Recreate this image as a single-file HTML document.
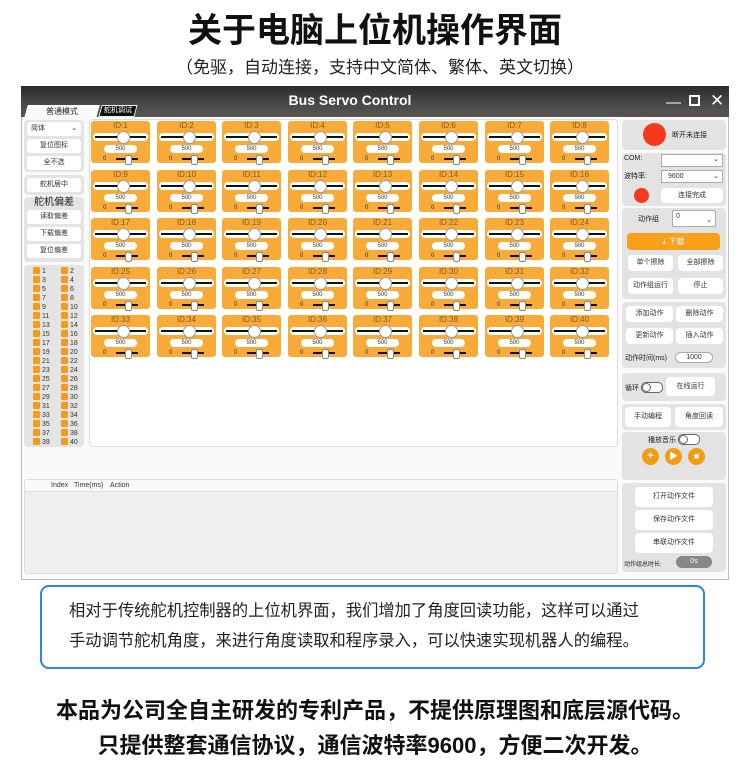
<!DOCTYPE html>
<html><head><meta charset="utf-8">
<style>
*{margin:0;padding:0;box-sizing:border-box}
body{width:750px;height:766px;background:#fff;position:relative;overflow:hidden;font-family:"Liberation Sans","Noto Sans CJK SC",sans-serif;color:#222}
.a{position:absolute}
.t1{left:0;width:750px;top:11px;text-align:center;font-size:34px;font-weight:bold;line-height:40px;color:#111}
.t2{left:0;width:760px;top:57px;text-align:center;font-size:17px;line-height:22px;color:#222}
.win{left:21px;top:86px;width:708px;height:494px;background:#fafafa;border:1px solid #bbb}
.tb{left:21px;top:86px;width:708px;height:31px;background:linear-gradient(#2b2b2b,#4a4a4a 60%,#5b5450)}
.ttl{left:200px;width:300px;top:92px;text-align:center;color:#fff;font-weight:bold;font-size:14px}
.tab1{left:26px;top:105px;width:72px;height:13px;background:#fafafa;transform:skewX(-15deg)}
.tab2{left:100px;top:105px;width:36px;height:12px;background:#111;border:1px solid #eee;transform:skewX(-15deg)}
.tl{font-size:8px;text-align:center;line-height:13px}
.wc{top:94px;color:#fff;font-size:15px}
.grid{left:89px;top:119px;width:529px;height:328px;background:#fff;border:1px solid #ddd;border-radius:4px}
.c{position:absolute;width:59px;height:42px;background:#f9ab3a;border-radius:3px;font-size:8px;color:#8a5a14;text-align:center;line-height:10px}
.c i{position:absolute;left:2px;top:12px;width:55px;height:8px;background:#fff;border-radius:4px}
.c i:before{content:"";position:absolute;left:2px;right:2px;top:3px;height:2px;background:#111}
.c i:after{content:"";position:absolute;left:24px;top:-2px;width:11px;height:11px;border-radius:50%;background:#fff;border:1px solid #999}
.c b{position:absolute;left:13px;top:24px;width:33px;height:8px;background:#fff;border-radius:4px;font-weight:normal;font-size:6px;line-height:8px;color:#333}
.c u{position:absolute;left:12px;top:33px;font-size:6px;text-decoration:none;color:#333}
.c s{position:absolute;left:25px;top:37px;width:22px;height:2px;background:#111}
.c s:after{content:"";position:absolute;left:9px;top:-3px;width:5px;height:8px;border-radius:2px;background:#fff;border:1px solid #888}
.lp{left:24px;background:#e4e4e4;border-radius:4px;width:60px}
.lb{position:absolute;left:3px;width:54px;height:14px;background:#fff;border-radius:3px;font-size:7px;text-align:center;line-height:14px;color:#333}
.ck{position:absolute;font-size:7px;line-height:9px;color:#333}
.ck span{display:inline-block;width:7px;height:7px;background:#f59a1c;border-radius:1px;margin-right:2px;vertical-align:-1px}
.rp{left:622px;width:104px;background:#e3e3e3;border-radius:4px}
.rb{position:absolute;background:#fff;border-radius:4px;font-size:7px;text-align:center;color:#333}
.log{left:24px;top:479px;width:594px;height:95px;background:#efefef;border:1px solid #ddd;border-radius:3px}
.box{left:40px;top:585px;width:665px;height:84px;border:2px solid #2b84f0;border-radius:9px}
.bt{left:69px;font-size:16.3px;line-height:20px;color:#222}
.ft{left:0;width:750px;text-align:center;font-size:22px;font-weight:bold;line-height:26px;color:#111}
.oc{position:absolute;width:17px;height:17px;border-radius:50%;background:#f39c12;color:#fff;font-size:11px;text-align:center;line-height:17px;font-weight:bold}
.tg{position:absolute;width:20px;height:9px;border:1px solid #666;border-radius:5px;background:#fff}
.tg:after{content:"";position:absolute;left:0;top:0;width:7px;height:7px;border-radius:50%;border:1px solid #666;background:#fff}
</style></head><body>
<div class="a t1">关于电脑上位机操作界面</div>
<div class="a t2">（免驱，自动连接，支持中文简体、繁体、英文切换）</div>

<div class="a win"></div>
<div class="a tb"></div>
<div class="a ttl">Bus Servo Control</div>
<div class="a tab1"></div>
<div class="a tl" style="left:26px;top:105px;width:72px">普通模式</div>
<div class="a tab2"></div>
<div class="a tl" style="left:100px;top:104px;width:36px;color:#fff;font-size:7px;overflow:hidden;height:12px">舵机调试</div>
<div class="a wc" style="left:666px">—</div>
<div class="a wc" style="left:689px;top:95px;width:11px;height:11px;border:2px solid #fff"></div>
<div class="a wc" style="left:710px;top:91px;font-size:17px">✕</div>

<div class="a lp" style="top:120px;height:52px">
<div class="lb" style="top:2px;text-align:left;padding-left:4px">简体<span style="float:right;margin-right:4px">⌄</span></div>
<div class="lb" style="top:19px">复位图标</div>
<div class="lb" style="top:36px">全不选</div>
</div>
<div class="a lp" style="top:175px;height:20px"><div class="lb" style="top:3px">舵机居中</div></div>
<div class="a lp" style="top:197px;height:65px">
<div style="position:absolute;top:0px;width:60px;text-align:center;font-size:10px;line-height:12px">舵机偏差</div>
<div class="lb" style="top:13px">读取偏差</div>
<div class="lb" style="top:30px">下载偏差</div>
<div class="lb" style="top:47px">复位偏差</div>
</div>
<div class="a lp" style="top:265px;height:182px">
<div class="ck" style="left:9px;top:2px"><span></span>1<br><span></span>3<br><span></span>5<br><span></span>7<br><span></span>9<br><span></span>11<br><span></span>13<br><span></span>15<br><span></span>17<br><span></span>19<br><span></span>21<br><span></span>23<br><span></span>25<br><span></span>27<br><span></span>29<br><span></span>31<br><span></span>33<br><span></span>35<br><span></span>37<br><span></span>39</div>
<div class="ck" style="left:37px;top:2px"><span></span>2<br><span></span>4<br><span></span>6<br><span></span>8<br><span></span>10<br><span></span>12<br><span></span>14<br><span></span>16<br><span></span>18<br><span></span>20<br><span></span>22<br><span></span>24<br><span></span>26<br><span></span>28<br><span></span>30<br><span></span>32<br><span></span>34<br><span></span>36<br><span></span>38<br><span></span>40</div>
</div>

<div class="a grid"></div>
<div class="c" style="left:91px;top:121px">ID:1<i></i><b>500</b><u>0</u><s></s></div>
<div class="c" style="left:157px;top:121px">ID:2<i></i><b>500</b><u>0</u><s></s></div>
<div class="c" style="left:222px;top:121px">ID:3<i></i><b>500</b><u>0</u><s></s></div>
<div class="c" style="left:288px;top:121px">ID:4<i></i><b>500</b><u>0</u><s></s></div>
<div class="c" style="left:353px;top:121px">ID:5<i></i><b>500</b><u>0</u><s></s></div>
<div class="c" style="left:419px;top:121px">ID:6<i></i><b>500</b><u>0</u><s></s></div>
<div class="c" style="left:485px;top:121px">ID:7<i></i><b>500</b><u>0</u><s></s></div>
<div class="c" style="left:550px;top:121px">ID:8<i></i><b>500</b><u>0</u><s></s></div>
<div class="c" style="left:91px;top:170px">ID:9<i></i><b>500</b><u>0</u><s></s></div>
<div class="c" style="left:157px;top:170px">ID:10<i></i><b>500</b><u>0</u><s></s></div>
<div class="c" style="left:222px;top:170px">ID:11<i></i><b>500</b><u>0</u><s></s></div>
<div class="c" style="left:288px;top:170px">ID:12<i></i><b>500</b><u>0</u><s></s></div>
<div class="c" style="left:353px;top:170px">ID:13<i></i><b>500</b><u>0</u><s></s></div>
<div class="c" style="left:419px;top:170px">ID:14<i></i><b>500</b><u>0</u><s></s></div>
<div class="c" style="left:485px;top:170px">ID:15<i></i><b>500</b><u>0</u><s></s></div>
<div class="c" style="left:550px;top:170px">ID:16<i></i><b>500</b><u>0</u><s></s></div>
<div class="c" style="left:91px;top:218px">ID:17<i></i><b>500</b><u>0</u><s></s></div>
<div class="c" style="left:157px;top:218px">ID:18<i></i><b>500</b><u>0</u><s></s></div>
<div class="c" style="left:222px;top:218px">ID:19<i></i><b>500</b><u>0</u><s></s></div>
<div class="c" style="left:288px;top:218px">ID:20<i></i><b>500</b><u>0</u><s></s></div>
<div class="c" style="left:353px;top:218px">ID:21<i></i><b>500</b><u>0</u><s></s></div>
<div class="c" style="left:419px;top:218px">ID:22<i></i><b>500</b><u>0</u><s></s></div>
<div class="c" style="left:485px;top:218px">ID:23<i></i><b>500</b><u>0</u><s></s></div>
<div class="c" style="left:550px;top:218px">ID:24<i></i><b>500</b><u>0</u><s></s></div>
<div class="c" style="left:91px;top:267px">ID:25<i></i><b>500</b><u>0</u><s></s></div>
<div class="c" style="left:157px;top:267px">ID:26<i></i><b>500</b><u>0</u><s></s></div>
<div class="c" style="left:222px;top:267px">ID:27<i></i><b>500</b><u>0</u><s></s></div>
<div class="c" style="left:288px;top:267px">ID:28<i></i><b>500</b><u>0</u><s></s></div>
<div class="c" style="left:353px;top:267px">ID:29<i></i><b>500</b><u>0</u><s></s></div>
<div class="c" style="left:419px;top:267px">ID:30<i></i><b>500</b><u>0</u><s></s></div>
<div class="c" style="left:485px;top:267px">ID:31<i></i><b>500</b><u>0</u><s></s></div>
<div class="c" style="left:550px;top:267px">ID:32<i></i><b>500</b><u>0</u><s></s></div>
<div class="c" style="left:91px;top:315px">ID:33<i></i><b>500</b><u>0</u><s></s></div>
<div class="c" style="left:157px;top:315px">ID:34<i></i><b>500</b><u>0</u><s></s></div>
<div class="c" style="left:222px;top:315px">ID:35<i></i><b>500</b><u>0</u><s></s></div>
<div class="c" style="left:288px;top:315px">ID:36<i></i><b>500</b><u>0</u><s></s></div>
<div class="c" style="left:353px;top:315px">ID:37<i></i><b>500</b><u>0</u><s></s></div>
<div class="c" style="left:419px;top:315px">ID:38<i></i><b>500</b><u>0</u><s></s></div>
<div class="c" style="left:485px;top:315px">ID:39<i></i><b>500</b><u>0</u><s></s></div>
<div class="c" style="left:550px;top:315px">ID:40<i></i><b>500</b><u>0</u><s></s></div>

<div class="a log">
<div style="height:12px;background:#fafafa;border-bottom:1px solid #ddd;font-size:7px;line-height:12px;color:#333;position:relative">
<span style="position:absolute;left:26px">Index</span><span style="position:absolute;left:49px">Time(ms)</span><span style="position:absolute;left:85px">Action</span></div>
</div>

<div class="a rp" style="top:120px;height:30px">
<div style="position:absolute;left:21px;top:3px;width:23px;height:23px;border-radius:50%;background:#f4391c"></div>
<div style="position:absolute;left:50px;top:10px;font-size:7px">断开未连接</div>
</div>
<div class="a rp" style="top:153px;height:53px">
<div style="position:absolute;left:2px;top:2px;font-size:7px">COM:</div>
<div class="rb" style="left:39px;top:1px;width:62px;height:13px;border:1px solid #aaa;border-radius:0;text-align:right;padding-right:3px">⌄</div>
<div style="position:absolute;left:2px;top:18px;font-size:7px">波特率:</div>
<div class="rb" style="left:39px;top:17px;width:62px;height:13px;border:1px solid #aaa;border-radius:0;text-align:left;padding-left:6px;line-height:12px">9600<span style="float:right;margin-right:3px">⌄</span></div>
<div style="position:absolute;left:12px;top:35px;width:15px;height:15px;border-radius:50%;background:#f4391c"></div>
<div class="rb" style="left:39px;top:35px;width:62px;height:15px;line-height:15px">连接完成</div>
</div>
<div class="a rp" style="top:208px;height:91px">
<div style="position:absolute;left:16px;top:6px;font-size:7px">动作组</div>
<div class="rb" style="left:50px;top:2px;width:44px;height:17px;border:1px solid #aaa;border-radius:2px;text-align:left;padding-left:3px;line-height:12px">0<span style="float:right;margin-right:3px;line-height:20px">⌄</span></div>
<div class="rb" style="left:5px;top:25px;width:93px;height:17px;background:#f9a01b;color:#fff;line-height:17px;font-size:8px">⤓ 下载</div>
<div class="rb" style="left:6px;top:47px;width:45px;height:16px;line-height:16px">单个擦除</div>
<div class="rb" style="left:56px;top:47px;width:45px;height:16px;line-height:16px">全部擦除</div>
<div class="rb" style="left:6px;top:70px;width:45px;height:16px;line-height:16px">动作组运行</div>
<div class="rb" style="left:56px;top:70px;width:45px;height:16px;line-height:16px">停止</div>
</div>
<div class="a rp" style="top:302px;height:66px">
<div class="rb" style="left:4px;top:4px;width:47px;height:16px;line-height:16px">添加动作</div>
<div class="rb" style="left:54px;top:4px;width:47px;height:16px;line-height:16px">删除动作</div>
<div class="rb" style="left:4px;top:26px;width:47px;height:16px;line-height:16px">更新动作</div>
<div class="rb" style="left:54px;top:26px;width:47px;height:16px;line-height:16px">插入动作</div>
<div style="position:absolute;left:3px;top:51px;font-size:7px">动作时间(ms)</div>
<div class="rb" style="left:53px;top:50px;width:38px;height:11px;border:1px solid #aaa;line-height:9px;border-radius:6px">1000</div>
</div>
<div class="a rp" style="top:373px;height:28px">
<div style="position:absolute;left:3px;top:10px;font-size:7px">循环</div>
<div class="tg" style="left:19px;top:9px;width:22px;height:11px"></div>
<div class="rb" style="left:44px;top:4px;width:49px;height:19px;line-height:19px">在线运行</div>
</div>
<div class="a rp" style="top:404px;height:26px">
<div class="rb" style="left:3px;top:3px;width:46px;height:20px;line-height:20px">手动编程</div>
<div class="rb" style="left:53px;top:3px;width:48px;height:20px;line-height:20px">角度回读</div>
</div>
<div class="a rp" style="top:432px;height:48px">
<div style="position:absolute;left:26px;top:3px;font-size:7px">播放音乐</div>
<div class="tg" style="left:56px;top:2px;width:22px;height:11px"></div>
<div class="oc" style="left:20px;top:16px">+</div>
<div class="oc" style="left:43px;top:16px;font-size:9px">▶</div>
<div class="oc" style="left:66px;top:16px;font-size:9px">■</div>
</div>
<div class="a rp" style="top:483px;height:89px">
<div class="rb" style="left:13px;top:4px;width:78px;height:20px;line-height:20px">打开动作文件</div>
<div class="rb" style="left:13px;top:27px;width:78px;height:20px;line-height:20px">保存动作文件</div>
<div class="rb" style="left:13px;top:50px;width:78px;height:20px;line-height:20px">串联动作文件</div>
<div style="position:absolute;left:2px;top:76px;font-size:6px">动作组总时长:</div>
<div class="rb" style="left:54px;top:73px;width:36px;height:12px;background:#888;color:#fff;border-radius:6px;line-height:12px">0s</div>
</div>

<div class="a box"></div>
<div class="a bt" style="top:601px">相对于传统舵机控制器的上位机界面，我们增加了角度回读功能，这样可以通过</div>
<div class="a bt" style="top:631px">手动调节舵机角度，来进行角度读取和程序录入，可以快速实现机器人的编程。</div>
<div class="a ft" style="top:698px">本品为公司全自主研发的专利产品，不提供原理图和底层源代码。</div>
<div class="a ft" style="top:733px">只提供整套通信协议，通信波特率9600，方便二次开发。</div>
</body></html>
